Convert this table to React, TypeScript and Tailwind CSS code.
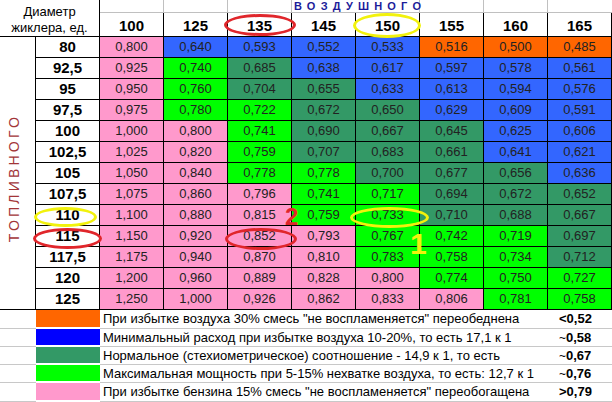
const AIR = ["100", "125", "135", "145", "150", "155", "160", "165"];

const BG: Record<string, string> = {
  P: "bg-[#ff99cc]",
  B: "bg-[#3366ff]",
  D: "bg-[#339966]",
  G: "bg-[#00ff00]",
  O: "bg-[#ff6600]",
};

const ROWS: [string, string, string[]][] = [
  ["80", "PBBBBOOO", ["0,800", "0,640", "0,593", "0,552", "0,533", "0,516", "0,500", "0,485"]],
  ["92,5", "PGDBBBBB", ["0,925", "0,740", "0,685", "0,638", "0,617", "0,597", "0,578", "0,561"]],
  ["95", "PGDDBBBB", ["0,950", "0,760", "0,704", "0,655", "0,633", "0,613", "0,594", "0,576"]],
  ["97,5", "PGGDDBBB", ["0,975", "0,780", "0,722", "0,672", "0,650", "0,629", "0,609", "0,591"]],
  ["100", "PPGDDDBB", ["1,000", "0,800", "0,741", "0,690", "0,667", "0,645", "0,625", "0,606"]],
  ["102,5", "PPGDDDBB", ["1,025", "0,820", "0,759", "0,707", "0,683", "0,661", "0,641", "0,621"]],
  ["105", "PPGGDDDB", ["1,050", "0,840", "0,778", "0,778", "0,700", "0,677", "0,656", "0,636"]],
  ["107,5", "PPPGGDDD", ["1,075", "0,860", "0,796", "0,741", "0,717", "0,694", "0,672", "0,652"]],
  ["110", "PPPGGDDD", ["1,100", "0,880", "0,815", "0,759", "0,733", "0,710", "0,688", "0,667"]],
  ["115", "PPPPGGGD", ["1,150", "0,920", "0,852", "0,793", "0,767", "0,742", "0,719", "0,697"]],
  ["117,5", "PPPPGGGD", ["1,175", "0,940", "0,870", "0,810", "0,783", "0,758", "0,734", "0,712"]],
  ["120", "PPPPPGGG", ["1,200", "0,960", "0,889", "0,828", "0,800", "0,774", "0,750", "0,727"]],
  ["125", "PPPPPPGG", ["1,250", "1,000", "0,926", "0,862", "0,833", "0,806", "0,781", "0,758"]],
];

const LEGEND: [string, string, string, string][] = [
  ["bg-[#ff6600]", "При избытке воздуха 30% смесь \"не воспламеняется\" переобеднена", "<", "0,52"],
  ["bg-[#0000ff]", "Минимальный расход при избытке воздуха 10-20%, то есть 17,1 к 1", "~", "0,58"],
  ["bg-[#339966]", "Нормальное (стехиометрическое) соотношение - 14,9 к 1, то есть", "~", "0,67"],
  ["bg-[#00ff00]", "Максимальная мощность при 5-15% нехватке воздуха, то есть: 12,7 к 1", "~", "0,76"],
  ["bg-[#ff99cc]", "При избытке бензина 15% смесь \"не воспламеняется\" переобогащена", ">", "0,79"],
];

export default function App() {
  return (
    <div className="relative w-[612px] h-[402px] overflow-hidden bg-white font-['Liberation_Sans',Arial,sans-serif] text-black">
      <div className="grid grid-cols-[36px_64px_repeat(8,64px)] grid-rows-[13px_24px_repeat(13,21px)]">
        {/* corner */}
        <div className="col-span-2 row-span-2 flex flex-col items-center justify-center pt-[3px] border-b border-r border-black text-[13px] leading-[16px]">
          <span>Диаметр</span>
          <span>жиклера, ед.</span>
        </div>

        {/* top strip */}
        <div className="border-r border-b border-[#c0c0c0]" />
        <div className="border-r border-b border-[#c0c0c0]" />
        <div className="border-r border-b border-[#c0c0c0]" />
        <div className="col-span-2 border-r border-b border-[#c0c0c0] flex items-center pl-[2px] text-[11px] font-bold leading-none tracking-[5.2px] text-[#1c1c9a]">
          ВОЗДУШНОГО
        </div>
        <div className="border-r border-b border-[#c0c0c0]" />
        <div className="border-r border-b border-[#c0c0c0]" />
        <div className="border-b border-[#c0c0c0]" />

        {/* air column headers */}
        {AIR.map((a) => (
          <div
            key={a}
            className="flex items-center justify-center pt-[3px] border-r border-b border-black text-[15px] font-bold"
          >
            {a}
          </div>
        ))}

        {/* fuel side label */}
        <div className="row-span-13 row-start-3 col-start-1 flex items-center justify-center pt-[10px] pr-[6px] border-r border-b border-black">
          <span className="[writing-mode:vertical-rl] rotate-180 text-[14px] tracking-[3.2px] text-[#a23538]">
            ТОПЛИВНОГО
          </span>
        </div>

        {ROWS.map(([fuel, colors, vals], r) =>
          [
            <div
              key={`h${r}`}
              className="col-start-2 flex items-center justify-center border-r border-b border-black text-[15px] font-bold"
            >
              {fuel}
            </div>,
            ...vals.map((v, i) => (
              <div
                key={`${r}-${i}`}
                className={`flex items-center justify-center border-r border-b border-black text-[13px] text-[#222] ${BG[colors[i]]}`}
              >
                {v}
              </div>
            )),
          ]
        )}
      </div>

      {/* legend */}
      <div className="grid grid-cols-[36px_64px_448px_64px] grid-rows-[19px_18px_18px_18px_19px]">
        {LEGEND.map(([bg, text, sign, value]) => [
          <div key={`a${value}`} className="border-b border-[#c8c8c8]" />,
          <div key={`b${value}`} className={`border-b-2 border-white ${bg}`} />,
          <div key={`c${value}`} className="flex items-center pl-[3px] border-b border-[#c8c8c8] text-[13px] whitespace-nowrap">
            {text}
          </div>,
          <div key={`d${value}`} className="flex items-center pl-[11px] border-b border-[#c8c8c8] text-[13px]">
            <span className={sign === "~" ? "font-normal text-[12px]" : "font-bold"}>{sign}</span>
            <span className="font-bold">{value}</span>
          </div>,
        ])}
      </div>

      {/* annotations drawn over the table */}
      <div className="pointer-events-none absolute left-[224px] top-[14px] h-[22px] w-[72px] rounded-[50%] border-[3px] border-[#e0262b]" />
      <div className="pointer-events-none absolute left-[353px] top-[13px] h-[25px] w-[68px] rounded-[50%] border-[3px] border-[#f2f20c]" />
      <div className="pointer-events-none absolute left-[34px] top-[207px] h-[20px] w-[63px] rounded-[50%] border-[3px] border-[#f2f20c]" />
      <div className="pointer-events-none absolute left-[33px] top-[228px] h-[21px] w-[69px] rounded-[50%] border-[3px] border-[#e0262b]" />
      <div className="pointer-events-none absolute left-[225px] top-[228px] h-[22px] w-[72px] rounded-[50%] border-[3px] border-[#e0262b]" />
      <div className="pointer-events-none absolute left-[350px] top-[207px] h-[21px] w-[79px] rounded-[50%] border-[3px] border-[#f2f20c]" />
      <span className="pointer-events-none absolute left-[285px] top-[205px] text-[24px] font-bold leading-none text-[#e0262b]">
        2
      </span>
      <span className="pointer-events-none absolute left-[410px] top-[229px] text-[30px] font-bold leading-none text-[#f2f20c]">
        1
      </span>
    </div>
  );
}
